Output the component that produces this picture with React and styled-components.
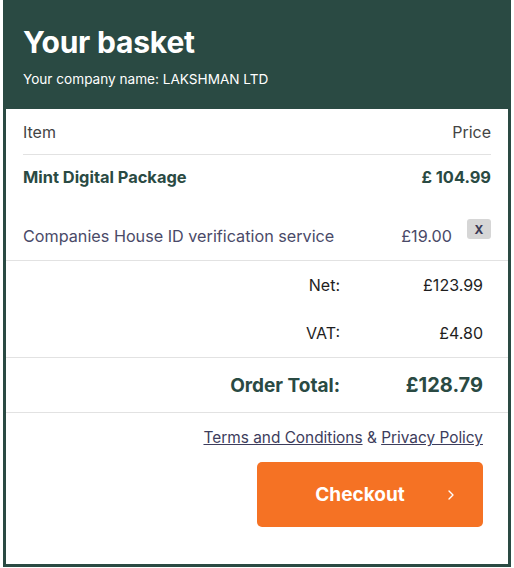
import styled, { createGlobalStyle } from "styled-components";
import { ChevronRight } from "lucide-react";

const GlobalStyle = createGlobalStyle`
  html, body {
    margin: 0;
    padding: 0;
    background: #fff;
  }
  body {
    font-family: "Inter", "Liberation Sans", sans-serif;
  }
`;

const items = [
  { name: "Mint Digital Package", price: "£ 104.99", main: true },
  { name: "Companies House ID verification service", price: "£19.00", removable: true },
];

export default function App() {
  return (
    <>
      <GlobalStyle />
      <Page>
        <Basket>
          <Header>
            <Title>Your basket</Title>
            <Company>Your company name: LAKSHMAN LTD</Company>
          </Header>
          <ItemList>
            <HeadRow>
              <span>Item</span>
              <span>Price</span>
            </HeadRow>
            {items.map((item) =>
              item.main ? (
                <MainRow key={item.name}>
                  <span>{item.name}</span>
                  <span>{item.price}</span>
                </MainRow>
              ) : (
                <ExtraRow key={item.name}>
                  <span>{item.name}</span>
                  <ExtraPrice>
                    <span>{item.price}</span>
                    <RemoveBtn>X</RemoveBtn>
                  </ExtraPrice>
                </ExtraRow>
              )
            )}
          </ItemList>
          <Totals>
            <SumRow>
              <span>Net:</span>
              <span>£123.99</span>
            </SumRow>
            <SumRow>
              <span>VAT:</span>
              <span>£4.80</span>
            </SumRow>
          </Totals>
          <TotalRow>
            <span>Order Total:</span>
            <TotalValue>£128.79</TotalValue>
          </TotalRow>
          <Footer>
            <Legal>
              <a href="#">Terms and Conditions</a> &amp; <a href="#">Privacy Policy</a>
            </Legal>
            <CheckoutBtn>
              <span>Checkout</span>
              <ChevronRight size={16} strokeWidth={2} />
            </CheckoutBtn>
          </Footer>
        </Basket>
      </Page>
    </>
  );
}

const Page = styled.div`
  padding: 0 3px 2px 3px;
`;

const Basket = styled.div`
  width: 508px;
  box-sizing: border-box;
  border: 3px solid #2a4a43;
  border-top: none;
  background: #fff;
`;

const Header = styled.div`
  background: #2a4a43;
  color: #fff;
  padding: 24px 17px 21px;
`;

const Title = styled.h1`
  margin: 0;
  font-size: 30px;
  line-height: 36px;
  font-weight: 700;
  letter-spacing: -0.2px;
`;

const Company = styled.p`
  margin: 10px 0 0;
  font-size: 13.6px;
  line-height: 18px;
`;

const ItemList = styled.div`
  padding: 0 17px 0 17px;
  border-bottom: 1px solid #e2e2e2;
`;

const HeadRow = styled.div`
  display: flex;
  justify-content: space-between;
  align-items: center;
  height: 45px;
  border-bottom: 1px solid #e2e2e2;
  font-size: 16px;
  color: #444;
`;

const MainRow = styled.div`
  display: flex;
  justify-content: space-between;
  align-items: center;
  height: 44px;
  font-size: 16.4px;
  font-weight: 700;
  color: #2a4a43;
`;

const ExtraRow = styled.div`
  display: flex;
  justify-content: space-between;
  align-items: center;
  padding: 20px 0 7px;
  line-height: 34px;
  font-size: 16.2px;
  color: #4a4a68;
`;

const ExtraPrice = styled.div`
  display: flex;
  align-items: center;
  gap: 15px;
`;

const RemoveBtn = styled.button`
  width: 24px;
  height: 20px;
  margin-top: -14px;
  padding: 0;
  border: none;
  border-radius: 3px;
  background: #d6d6d6;
  color: #3a3a55;
  font-family: inherit;
  font-size: 12px;
  font-weight: 700;
`;

const Totals = styled.div`
  padding: 0 25px 0 0;
  border-bottom: 1px solid #e2e2e2;
`;

const SumRow = styled.div`
  display: grid;
  grid-template-columns: 1fr 143px;
  align-items: center;
  height: 48px;
  font-size: 16px;
  color: #1e1e1e;
  text-align: right;
`;

const TotalRow = styled.div`
  display: grid;
  grid-template-columns: 1fr 143px;
  align-items: center;
  height: 54px;
  padding-right: 25px;
  border-bottom: 1px solid #e2e2e2;
  text-align: right;
  font-weight: 700;
  font-size: 19px;
  color: #2a4a43;
`;

const TotalValue = styled.span`
  font-size: 20px;
`;

const Footer = styled.div`
  display: flex;
  flex-direction: column;
  align-items: flex-end;
  padding: 15px 25px 37px 0;
`;

const Legal = styled.div`
  font-size: 15.4px;
  line-height: 20px;
  color: #3d3d5c;

  a {
    color: #3d3d5c;
    text-decoration: underline;
  }
`;

const CheckoutBtn = styled.button`
  margin-top: 14px;
  width: 226px;
  height: 65px;
  display: flex;
  align-items: center;
  padding: 0 24px 0 20px;
  border: none;
  border-radius: 5px;
  background: #f57224;
  color: #fff;
  font-family: inherit;
  font-size: 19px;
  font-weight: 700;

  span {
    flex: 1;
    text-align: center;
  }
`;
